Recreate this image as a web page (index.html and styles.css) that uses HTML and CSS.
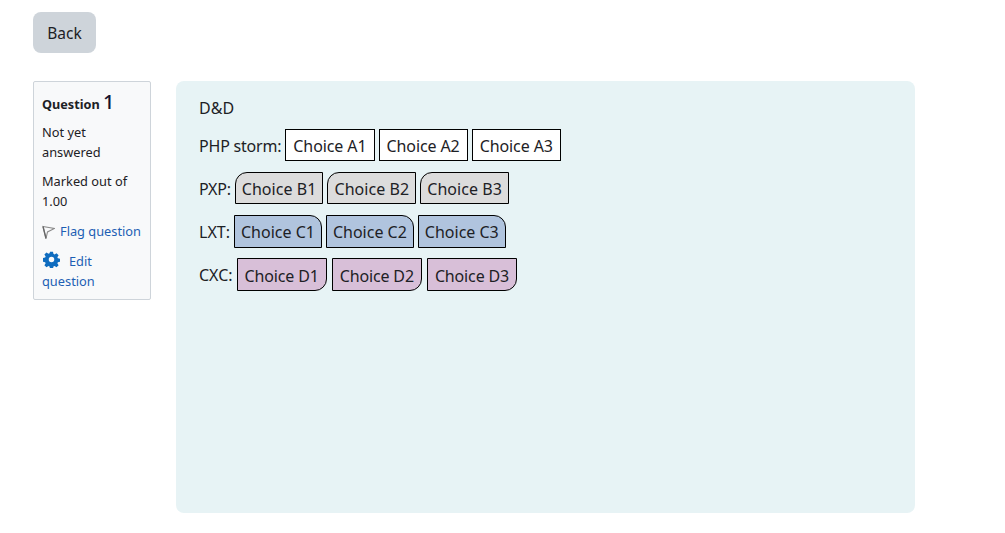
FILE: index.html
```html
<!DOCTYPE html>
<html lang="en">
<head>
<meta charset="utf-8">
<title>D&amp;D</title>
<link rel="stylesheet" href="styles.css">
</head>
<body>
<a class="back" href="#">Back</a>
<div class="que">
  <aside class="info">
    <h3 class="qno">Question <span class="num">1</span></h3>
    <p class="state">Not yet answered</p>
    <p class="grade">Marked out of 1.00</p>
    <p class="flag"><svg class="flag-icon" viewBox="0 0 13 14" width="13" height="14" aria-hidden="true"><path d="M1 1.500 12.500 3.500 5.500 7 4 13.500Z" fill="#f8f9fa" stroke="#8a8a8a" stroke-width="1.100"/><path d="M1 1.500 4 13.500" stroke="#666" stroke-width="1.300" fill="none"/></svg><a href="#">Flag question</a></p>
    <p class="edit"><svg class="gear" viewBox="0 0 16 16" width="17" height="17" aria-hidden="true"><path fill-rule="evenodd" fill="#0f6cbf" d="M6.600.6h2.800l.4 2.100 1.100.5 1.800-1.200 2 2-1.200 1.800.5 1.100 2.100.4v2.800l-2.100.4-.5 1.100 1.200 1.800-2 2-1.800-1.200-1.100.5-.4 2.100H6.600l-.4-2.100-1.100-.5-1.800 1.200-2-2 1.200-1.800-.5-1.100-2.100-.4V6.600l2.100-.4.5-1.100L1.300 3.300l2-2 1.800 1.200 1.100-.5ZM8 5.400a2.600 2.600 0 1 0 0 5.200 2.600 2.600 0 0 0 0-5.200Z"/></svg><a href="#">Edit question</a></p>
  </aside>
  <main class="content">
    <p class="title">D&amp;D</p>
    <div class="row"><span class="label php">PHP storm:</span><span class="choice white">Choice A1</span><span class="choice white">Choice A2</span><span class="choice white">Choice A3</span></div>
    <div class="row"><span class="label pxp">PXP:</span><span class="choice grey">Choice B1</span><span class="choice grey">Choice B2</span><span class="choice grey">Choice B3</span></div>
    <div class="row"><span class="label">LXT:</span><span class="choice blue">Choice C1</span><span class="choice blue">Choice C2</span><span class="choice blue">Choice C3</span></div>
    <div class="row row-wide"><span class="label">CXC:</span><span class="choice pink">Choice D1</span><span class="choice pink">Choice D2</span><span class="choice pink">Choice D3</span></div>
  </main>
</div>
</body>
</html>
```
FILE: styles.css
```css
* { box-sizing: border-box; }
body {
  margin: 0;
  padding: 12px 0 0 33px;
  background: #fff;
  color: #1d2125;
  font-family: "Noto Sans", "Open Sans", sans-serif;
  font-size: 16px;
  line-height: 22px;
}
a { color: #1d5fb4; text-decoration: none; }
p { margin: 0; }
.back {
  display: block;
  width: 63px;
  height: 41px;
  border-radius: 8px;
  background: #ced4da;
  color: #1d2125;
  text-align: center;
  line-height: 42px;
  font-size: 15.500px;
}
.que { display: flex; gap: 25px; margin-top: 28px; }
.info {
  width: 118px;
  height: 219px;
  padding: 9px 8px 0;
  background: #f8f9fa;
  border: 1px solid #ced4da;
  border-radius: 2px;
  font-size: 12.800px;
  line-height: 20px;
}
.qno { margin: 0 0 7px; font-size: 12.700px; font-weight: 700; line-height: 21px; }
.num { font-size: 20px; font-weight: 500; color: #14122e; }
.state, .grade { margin-bottom: 9px; }
.flag { margin-bottom: 10px; margin-top: 10px; white-space: nowrap; }
.flag-icon { margin-right: 5px; vertical-align: -3px; }
.gear { margin-left: 1px; margin-right: 9px; vertical-align: -2px; }
.content {
  width: 739px;
  height: 432px;
  padding: 16px 23px;
  background: #e7f3f5;
  border-radius: 8px;
}
.title { margin-bottom: 10px; }
.row { display: flex; align-items: center; gap: 4px; margin-bottom: 10px; height: 33px; }
.row-wide { gap: 5px; }
.row-wide .label { margin-right: -1px; }
.php { letter-spacing: -.2px; }
.pxp { letter-spacing: -.25px; }
.choice {
  display: block;
  height: 32px;
  padding: 0 6px;
  border: 1px solid #000;
  background: #fff;
  line-height: 32px;
  white-space: nowrap;
  align-self: flex-start;
}
.white { padding: 0 7px; letter-spacing: -.1px; }
.grey { background: #dcdcdc; border-top-left-radius: 12px; letter-spacing: .06px; }
.blue { background: #b0c4de; border-top-right-radius: 12px; height: 33px; line-height: 33px; }
.pink { background: #d8bfd8; border-bottom-right-radius: 12px; height: 33px; padding: 0 7px; line-height: 34px; letter-spacing: -.15px; }
```
